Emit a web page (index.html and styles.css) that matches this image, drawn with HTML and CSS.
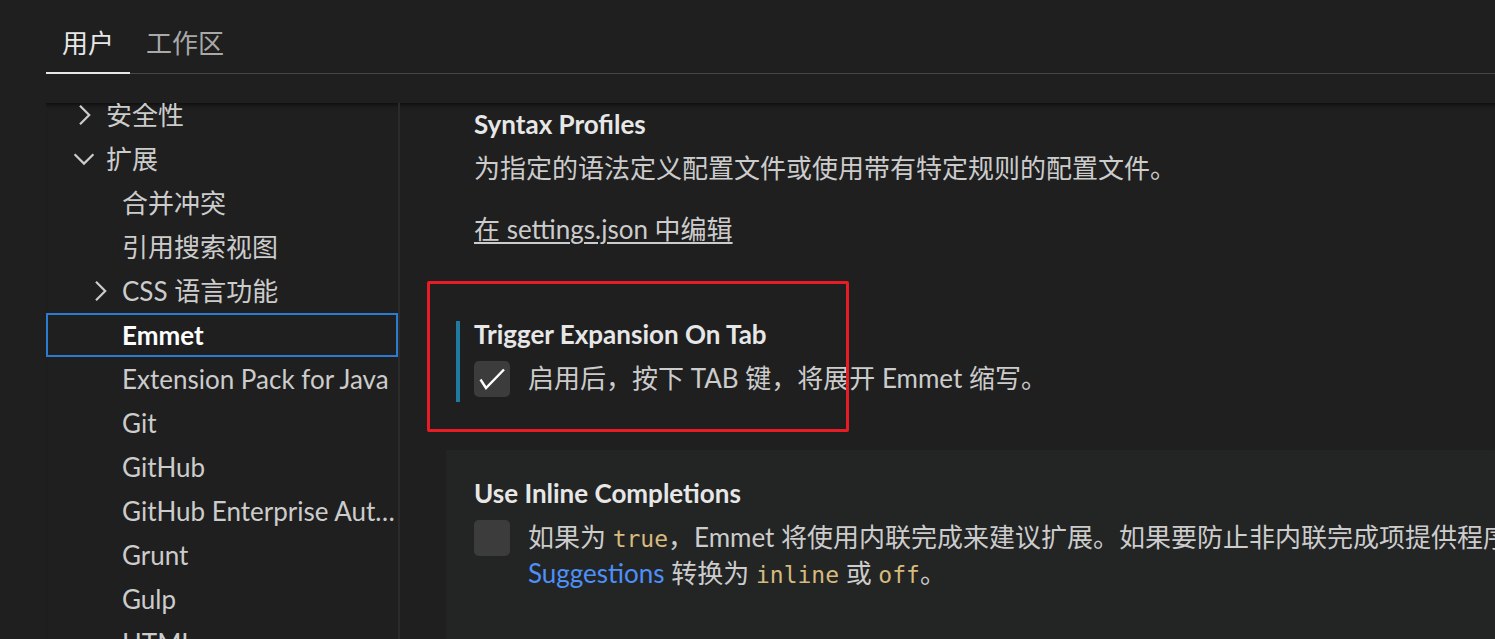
FILE: index.html
```html
<!DOCTYPE html>
<html lang="zh-CN">
<head>
<meta charset="utf-8">
<title>设置</title>
<link rel="stylesheet" href="styles.css">
</head>
<body>
<div class="settings">
  <header class="header">
    <nav class="tabs">
      <div class="tab active">用户</div>
      <div class="tab">工作区</div>
    </nav>
  </header>
  <main class="body">
    <aside class="toc">
      <ul class="tree">
        <li class="row l1"><svg class="chev" viewBox="0 0 16 16"><polyline points="6,3.4 10.6,8 6,12.6"/></svg><span>安全性</span></li>
        <li class="row l1"><svg class="chev" viewBox="0 0 16 16"><polyline points="3.3,5.6 8,10.3 12.7,5.6"/></svg><span>扩展</span></li>
        <li class="row l2 leaf"><span>合并冲突</span></li>
        <li class="row l2 leaf"><span>引用搜索视图</span></li>
        <li class="row l2"><svg class="chev" viewBox="0 0 16 16"><polyline points="6,3.4 10.6,8 6,12.6"/></svg><span>CSS 语言功能</span></li>
        <li class="row l2 leaf selected"><span>Emmet</span></li>
        <li class="row l2 leaf"><span>Extension Pack for Java</span></li>
        <li class="row l2 leaf"><span>Git</span></li>
        <li class="row l2 leaf"><span>GitHub</span></li>
        <li class="row l2 leaf"><span>GitHub Enterprise Aut…</span></li>
        <li class="row l2 leaf"><span>Grunt</span></li>
        <li class="row l2 leaf"><span>Gulp</span></li>
        <li class="row l2 leaf"><span>HTML</span></li>
      </ul>
    </aside>
    <section class="content">
      <div class="item item-first">
        <div class="item-inner">
          <div class="title">Syntax Profiles</div>
          <div class="desc">为指定的语法定义配置文件或使用带有特定规则的配置文件。</div>
          <a class="edit-link" href="#">在 settings.json 中编辑</a>
        </div>
      </div>
      <div class="item modified">
        <div class="item-inner">
          <div class="title">Trigger Expansion On Tab</div>
          <div class="bool-row">
            <span class="checkbox"><svg viewBox="0 0 36 36"><polyline points="6.5,18.5 12,27 30,8.5"/></svg></span>
            <div class="desc">启用后，按下 TAB 键，将展开 Emmet 缩写。</div>
          </div>
        </div>
      </div>
      <div class="item hovered">
        <div class="item-inner">
          <div class="title">Use Inline Completions</div>
          <div class="bool-row">
            <span class="checkbox"></span>
            <div class="desc">
              <div class="line">如果为 <code>true</code>，Emmet 将使用内联完成来建议扩展。如果要防止非内联完成项提供程序在此设置为 <code>true</code> 时经常显示，请将 <code>other</code> 项的 <a class="link" href="#">Editor: Quick</a></div>
              <div class="line"><a class="link" href="#">Suggestions</a> 转换为 <code>inline</code> 或 <code>off</code>。</div>
            </div>
          </div>
        </div>
      </div>
    </section>
  </main>
  <div class="annotation"></div>
</div>
</body>
</html>
```

FILE: styles.css
```css
* { box-sizing: border-box; }
html, body { margin: 0; height: 100%; }
body {
  background: #1f1f1f;
  color: #cccccc;
  font-family: "Lato", "Noto Sans CJK SC", sans-serif;
  font-size: 26px;
  overflow: hidden;
}
.settings {
  position: relative;
  height: 639px;
  display: flex;
  flex-direction: column;
}
.header {
  flex: none;
  height: 103px;
  padding: 22px 0 0 46px;
}
.tabs {
  display: flex;
  border-bottom: 1px solid #454545;
}
.tab {
  padding: 0 16px 9px;
  line-height: 42px;
  color: #a9a9a9;
}
.tab.active {
  color: #e7e7e7;
  padding-bottom: 8px;
  border-bottom: 2px solid #e7e7e7;
  margin-bottom: -1px;
}
.body {
  flex: 1;
  min-height: 0;
  display: flex;
  margin-left: 46px;
  box-shadow: inset 0 6px 6px -6px #000;
}
.toc {
  flex: none;
  width: 354px;
  border-right: 2px solid #2b2b2b;
  overflow: hidden;
}
.tree {
  list-style: none;
  margin: -10px 0 0;
  padding: 0;
}
.row {
  height: 44px;
  line-height: 44px;
  display: flex;
  align-items: center;
  white-space: nowrap;
  overflow: hidden;
  padding-right: 4px;
}
.l1 { padding-left: 22px; }
.l2 { padding-left: 38px; }
.l2.leaf { padding-left: 76px; }
.row.selected {
  border: 2px solid #2b7bd3;
  padding-left: 74px;
  font-weight: 700;
  color: #ffffff;
}
.chev {
  flex: none;
  width: 32px;
  height: 32px;
  margin-right: 6px;
  fill: none;
  stroke: #cccccc;
  stroke-width: 1.1;
}
.content {
  flex: 1;
  min-width: 0;
  padding-left: 46px;
  overflow: hidden;
}
.item {
  padding: 30px 0 48px 28px;
}
.item-first {
  padding-top: 8px;
  padding-bottom: 44px;
}
.item.hovered {
  background: #232424;
}
.item-inner {
  position: relative;
  padding-bottom: 5px;
}
.modified .item-inner::before {
  content: "";
  position: absolute;
  left: -18px;
  top: 0;
  bottom: 0;
  width: 4px;
  background: #1f7ba1;
}
.title {
  font-weight: 700;
  line-height: 26px;
  color: #e7e7e7;
  margin-bottom: 13px;
  white-space: nowrap;
}
.desc {
  line-height: 36px;
  white-space: nowrap;
}
.edit-link {
  display: block;
  width: fit-content;
  margin-top: 30px;
  line-height: 26px;
  color: #cccccc;
  text-decoration: underline;
  text-underline-offset: 3px;
}
.bool-row {
  display: flex;
  align-items: flex-start;
  gap: 18px;
}
.checkbox {
  flex: none;
  width: 36px;
  height: 36px;
  margin-top: 1px;
  border-radius: 5px;
  background: #3c3c3c;
}
.checkbox svg {
  display: block;
  width: 36px;
  height: 36px;
  fill: none;
  stroke: #ffffff;
  stroke-width: 2.4;
}
.line {
  height: 36px;
  white-space: nowrap;
}
code {
  font-family: "DejaVu Sans Mono", "Liberation Mono", monospace;
  font-size: 23px;
  line-height: 1;
  color: #d7ba7d;
}
.link {
  color: #4d90f8;
  text-decoration: none;
}
.annotation {
  position: absolute;
  left: 427px;
  top: 281px;
  width: 422px;
  height: 151px;
  border: 3px solid #e81c24;
  border-radius: 2px;
  pointer-events: none;
}
```
